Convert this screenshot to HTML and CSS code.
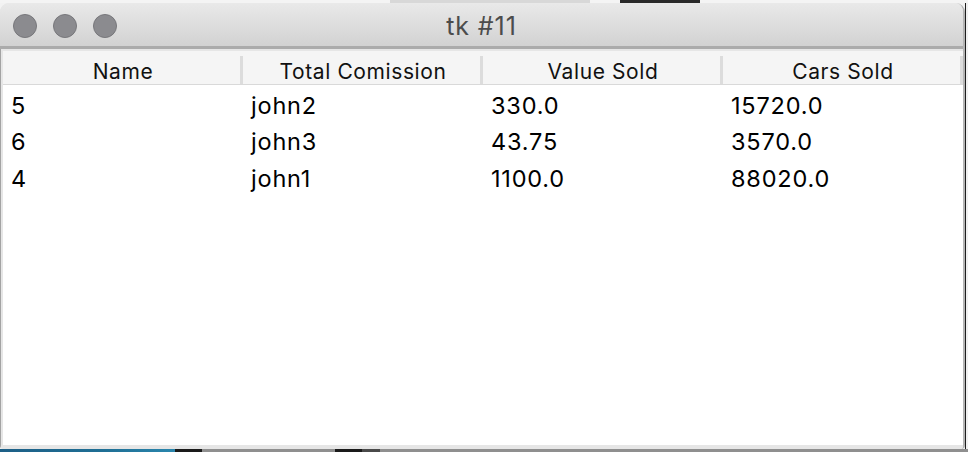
FILE: index.html
```html
<!DOCTYPE html>
<html>
<head>
<meta charset="utf-8">
<link rel="stylesheet" href="styles.css">
</head>
<body>
<div class="desk">
  <div class="top-strip">
    <div class="seg seg-light w390"></div>
    <div class="seg seg-sheet w200"></div>
    <div class="seg seg-light w30"></div>
    <div class="seg seg-dark w80"></div>
    <div class="seg seg-light grow"></div>
  </div>
  <div class="middle">
    <div class="window">
      <div class="titlebar">
        <div class="lights">
          <span class="light"></span>
          <span class="light"></span>
          <span class="light"></span>
        </div>
        <div class="title">tk #11</div>
      </div>
      <div class="body">
        <div class="table">
          <div class="head">
            <div class="hcell">Name</div>
            <div class="hcell">Total Comission</div>
            <div class="hcell">Value Sold</div>
            <div class="hcell">Cars Sold</div>
          </div>
          <div class="rows">
            <div class="row"><div class="cell">5</div><div class="cell">john2</div><div class="cell">330.0</div><div class="cell">15720.0</div></div>
            <div class="row"><div class="cell">6</div><div class="cell">john3</div><div class="cell">43.75</div><div class="cell">3570.0</div></div>
            <div class="row"><div class="cell">4</div><div class="cell">john1</div><div class="cell">1100.0</div><div class="cell">88020.0</div></div>
          </div>
        </div>
      </div>
    </div>
    <div class="right-edge"></div>
  </div>
  <div class="bottom-strip">
    <div class="seg blue w175"></div>
    <div class="seg black w27"></div>
    <div class="seg grey w133"></div>
    <div class="seg black w27"></div>
    <div class="seg dgrey w18"></div>
    <div class="seg grey grow"></div>
  </div>
</div>
</body>
</html>
```
FILE: styles.css
```css
* { box-sizing: border-box; }
html, body { margin: 0; padding: 0; }
body {
  width: 968px;
  height: 452px;
  overflow: hidden;
  background: #f2f2f2;
  font-family: Inter, "Liberation Sans", sans-serif;
}
.desk { display: flex; flex-direction: column; height: 452px; }
.top-strip { display: flex; height: 3px; flex: none; }
.seg { height: 100%; }
.grow { flex: 1; }
.w390 { width: 390px; }
.w200 { width: 200px; }
.w30 { width: 30px; }
.w80 { width: 80px; }
.w175 { width: 175px; }
.w27 { width: 27px; }
.w133 { width: 133px; }
.w18 { width: 18px; }
.seg-light { background: #f4f4f4; }
.seg-sheet { background: #d8d8d8; }
.seg-dark { background: #2a2a2a; }
.blue { background: linear-gradient(90deg, #1d5f86, #1f6f95 60%, #2a86ad); }
.black { background: #1a1a1a; }
.grey { background: #8f8f8f; }
.dgrey { background: #4a4a4a; }

.middle { display: flex; flex: none; height: 446px; }
.window {
  width: 965px;
  height: 446px;
  display: flex;
  flex-direction: column;
  border-radius: 9px 9px 4px 4px;
  overflow: hidden;
  background: #e6e6e6;
  border-right: 2px solid #b5b5b5;
}
.right-edge { flex: 1; background: linear-gradient(90deg, #1e1e1e 0 1px, #f0f0f0 1px); }
.titlebar {
  height: 46px;
  flex: none;
  position: relative;
  display: flex;
  align-items: center;
  justify-content: center;
  background: linear-gradient(#e9e9e9, #d2d2d2);
  border-bottom: 3px solid #ababab;
  padding-top: 2px;
}
.lights {
  position: absolute;
  left: 13px;
  top: 11px;
  display: flex;
  gap: 16px;
}
.light {
  width: 24px;
  height: 24px;
  border-radius: 50%;
  background: #8b8b8f;
  border: 1px solid #77777b;
}
.title {
  font-size: 25px;
  color: #4c4c4c;
  letter-spacing: 0.9px;
}
.body {
  flex: 1;
  padding: 2px 0 4px 2px;
  border-left: 1px solid #a3a3a3;
  background: #e6e6e6;
  display: flex;
}
.table {
  flex: 1;
  background: #fff;
}
.head {
  display: grid;
  grid-template-columns: repeat(4, 240px);
  height: 34px;
  background: #f5f5f5;
  border-bottom: 1px solid #d9d9d9;
}
.hcell {
  display: flex;
  align-items: center;
  justify-content: center;
  font-size: 21px;
  letter-spacing: 0.6px;
  color: #111;
  border-right: 3px solid #dcdcdc;
  margin: 5px 0;
  padding: 3px 0 0 3px;
}
.rows { padding-top: 2px; }
.row {
  display: grid;
  grid-template-columns: repeat(4, 240px);
  height: 36.5px;
  align-items: center;
}
.cell {
  padding-left: 8px;
  font-size: 23.5px;
  letter-spacing: 0.8px;
  color: #000;
}
.bottom-strip { display: flex; flex: 1; }
```
